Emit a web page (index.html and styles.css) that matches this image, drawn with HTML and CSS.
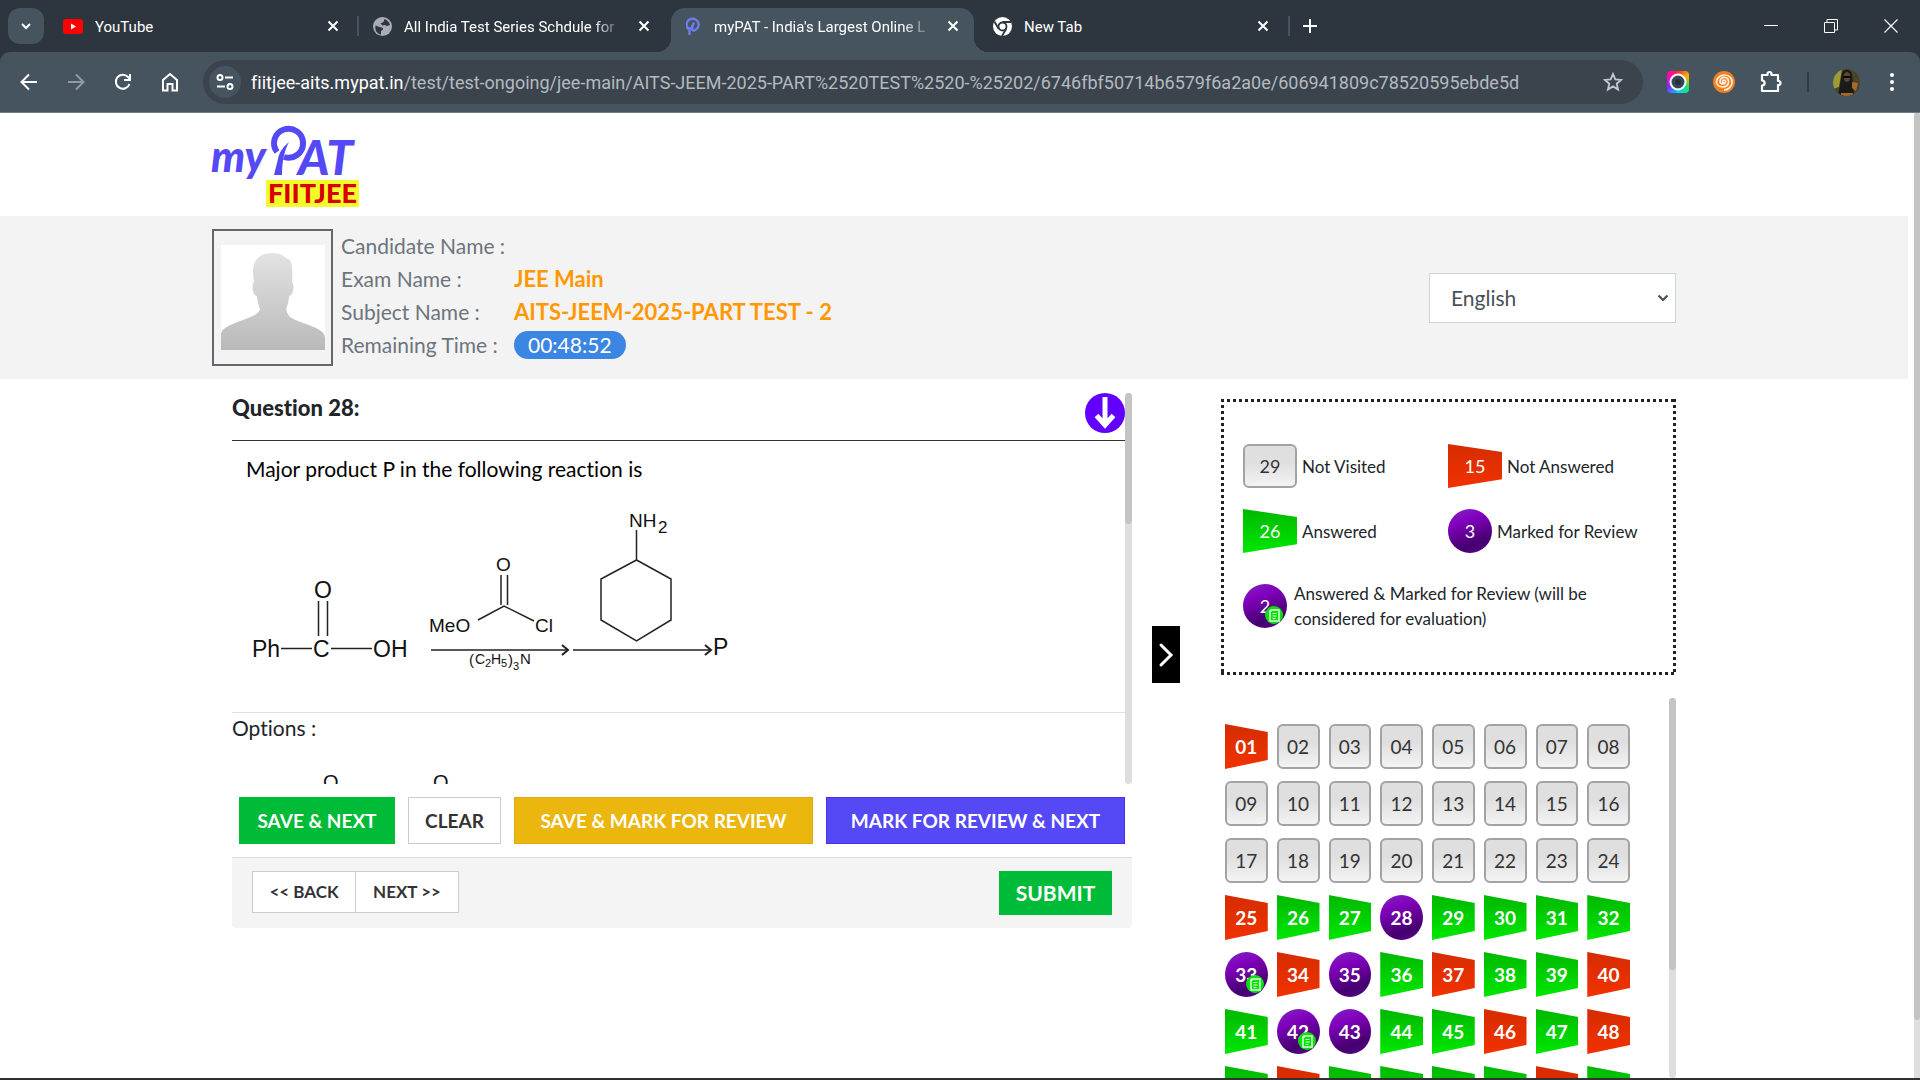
FILE: index.html
```html
<!DOCTYPE html>
<html lang="en">
<head>
<meta charset="utf-8">
<title>myPAT - India's Largest Online Test</title>
<link rel="stylesheet" href="styles.css">
</head>
<body>
<svg class="defs" aria-hidden="true">
  <symbol id="x" viewBox="0 0 12 12"><path d="M1.5 1.5l9 9M10.500 1.500l-9 9" stroke="currentColor" stroke-width="2" fill="none"/></symbol>
  <symbol id="note" viewBox="0 0 18 18"><circle cx="9" cy="9" r="9" fill="#0be00b"/><path d="M4 5h2V4h8v11H5V5" fill="none" stroke="#d9ffd9" stroke-width="1.500"/><path d="M7.500 7.500h4M7.500 10h4M7.500 12.500h3" stroke="#d9ffd9" stroke-width="1.200"/></symbol>
</svg>

<div class="browser">
  <div class="tabs">
    <button class="tab-search" aria-label="Search tabs"><svg width="12" height="12" viewBox="0 0 12 12"><path d="M2 4l4 4 4-4" fill="none" stroke="#fff" stroke-width="2"/></svg></button>
    <div class="tab tab-first">
      <svg width="20" height="15" viewBox="0 0 20 15"><rect width="20" height="15" rx="3" fill="#f00"/><path d="M8 4.500v6l5-3z" fill="#fff"/></svg>
      <span class="tab-title">YouTube</span>
      <button class="tab-close" aria-label="Close tab"><svg><use href="#x"/></svg></button>
    </div>
    <span class="tab-sep"></span>
    <div class="tab tab-second">
      <svg width="19" height="19" viewBox="0 0 19 19"><circle cx="9.500" cy="9.500" r="9.500" fill="#a9adb3"/><path d="M2.500 8.500l4 1.500c2 0 4 1 3.500 2.500l-2 1.500v3.500C4 17 1.500 13 2.500 8.500zM11.500 2c3 1 5 3.500 5.500 6l-3 1-2.500-1-2 .5-2-2 3-1.500z" fill="#2d363f"/></svg>
      <span class="tab-title fade">All India Test Series Schdule for</span>
      <button class="tab-close" aria-label="Close tab"><svg><use href="#x"/></svg></button>
    </div>
    <div class="tab tab-active">
      <svg width="16" height="20" viewBox="0 0 16 20"><path d="M2.500 13A6 6 0 1 1 8 14.500c-1.500 0-2-.5-2-2 0-3 1-4 2-6M3.500 11v8" fill="none" stroke="#6a7de8" stroke-width="2.500"/></svg>
      <span class="tab-title fade">myPAT - India's Largest Online L</span>
      <button class="tab-close" aria-label="Close tab"><svg><use href="#x"/></svg></button>
    </div>
    <div class="tab tab-last">
      <svg width="19" height="19" viewBox="0 0 19 19"><circle cx="9.500" cy="9.500" r="9.500" fill="#fff"/><circle cx="9.500" cy="9.500" r="4" fill="#fff" stroke="#2d363f" stroke-width="1.800"/><path d="M9.500 5H18M5.800 12L1.500 4.800M13.300 11.800L9 19" stroke="#2d363f" stroke-width="1.800"/></svg>
      <span class="tab-title">New Tab</span>
      <button class="tab-close" aria-label="Close tab"><svg><use href="#x"/></svg></button>
    </div>
    <span class="tab-sep"></span>
    <button class="tab-new" aria-label="New tab"><svg width="14" height="14" viewBox="0 0 14 14"><path d="M7 0v14M0 7h14" stroke="#fff" stroke-width="2"/></svg></button>
    <div class="window">
      <button aria-label="Minimize"><svg width="14" height="14" viewBox="0 0 14 14"><path d="M0 6.500h14" stroke="#fff"/></svg></button>
      <button aria-label="Restore"><svg width="14" height="14" viewBox="0 0 14 14"><path d="M.5 3.500h10v10H.5zM3 3V.5h10.500V11H11" fill="none" stroke="#fff"/></svg></button>
      <button aria-label="Close window"><svg width="14" height="14" viewBox="0 0 14 14"><path d="M.5.5l13 13M13.500.5l-13 13" stroke="#fff" stroke-width="1.200"/></svg></button>
    </div>
  </div>

  <div class="toolbar">
    <button class="nav" aria-label="Back"><svg width="18" height="18" viewBox="0 0 18 18"><path d="M17 9H2M9 1.500L1.500 9 9 16.500" fill="none" stroke="#fff" stroke-width="2"/></svg></button>
    <button class="nav" aria-label="Forward"><svg width="18" height="18" viewBox="0 0 18 18"><path d="M1 9h15M9 1.500L16.500 9 9 16.500" fill="none" stroke="#8f9aa3" stroke-width="2"/></svg></button>
    <button class="nav" aria-label="Reload"><svg width="18" height="18" viewBox="0 0 18 18"><path d="M15.500 11A7 7 0 1 1 14 4l2 2M16 1v6h-6" fill="none" stroke="#fff" stroke-width="2"/></svg></button>
    <button class="nav" aria-label="Home"><svg width="18" height="20" viewBox="0 0 18 20"><path d="M2 8l7-6 7 6v10.500h-4.500V12h-5v6.500H2z" fill="none" stroke="#fff" stroke-width="2"/></svg></button>
    <div class="omnibox">
      <button class="site" aria-label="Site information"><svg width="18" height="16" viewBox="0 0 18 16"><g fill="none" stroke="#fff" stroke-width="2"><circle cx="4" cy="3.500" r="2.500"/><path d="M9 3.500h8M1 12.500h8"/><circle cx="14" cy="12.500" r="2.500"/></g></svg></button>
      <span class="url"><b>fiitjee-aits.mypat.in</b>/test/test-ongoing/jee-main/AITS-JEEM-2025-PART%2520TEST%2520-%25202/6746fbf50714b6579f6a2a0e/606941809c78520595ebde5d</span>
      <button class="star" aria-label="Bookmark"><svg width="20" height="20" viewBox="0 0 20 20"><path d="M10 2l2.300 5.400 5.900.5-4.500 3.800 1.400 5.800L10 14.400l-5.100 3.100 1.400-5.800L1.800 7.900l5.900-.5z" fill="none" stroke="#c5c9cc" stroke-width="1.800"/></svg></button>
    </div>
    <div class="extensions">
      <button class="rainbow" aria-label="Camera extension"><svg width="18" height="18" viewBox="0 0 18 18"><circle cx="9" cy="9" r="7.500" fill="#39455a" stroke="#fff" stroke-width="2"/><circle cx="9" cy="9" r="3" fill="#233"/></svg></button>
      <button aria-label="Spiral extension"><svg width="22" height="22" viewBox="0 0 22 22"><circle cx="11" cy="11" r="11" fill="#f57f1e"/><path d="M11 12a1.500 1.500 0 1 1 1.500-1.500c0 3-5.500 3.500-5.500 0C7 5 15.500 5 15.500 11c0 7-12 6-12 0 0-4 4-7 8-7 5 0 8 3.500 7.500 8-.5 4-4 7-8 7" fill="none" stroke="#fff1e0" stroke-width="1.700"/></svg></button>
      <button aria-label="Extensions"><svg width="24" height="24" viewBox="0 0 24 24"><path d="M3 5h5.500V4a2 2 0 0 1 4 0v1H19v6h.5a2 2 0 0 1 0 4H19v6H3v-5.500c3.500 0 3.500-5 0-5z" fill="none" stroke="#fff" stroke-width="2.200" stroke-linejoin="round"/></svg></button>
      <span class="tool-sep"></span>
      <button aria-label="Profile"><svg width="27" height="27" viewBox="0 0 27 27"><defs><clipPath id="av"><circle cx="13.500" cy="13.500" r="13.500"/></clipPath></defs><g clip-path="url(#av)"><path fill="#4a4526" d="M0 0h27v27H0z"/><path fill="#9d9b35" d="M0 0h9L6 18 0 20z"/><path fill="#1a1a1b" d="M9 4c2-5 9-4 10 1l2 22H5z"/><ellipse cx="14" cy="8" rx="3.500" ry="5" fill="#60452f"/><path fill="#0b0b0b" d="M10 7h8v2h-8z"/><path fill="#a46a2b" d="M19 13l6 1-2 8-4-3zM8 24h12v3H8z"/></g></svg></button>
      <button class="menu" aria-label="Menu"><svg width="4" height="20" viewBox="0 0 4 20"><g fill="#fff"><circle cx="2" cy="3" r="2"/><circle cx="2" cy="10" r="2"/><circle cx="2" cy="17" r="2"/></g></svg></button>
    </div>
  </div>
</div>

<div class="viewport">
  <div class="page">
    <header class="brand">
      <a href="#" aria-label="myPAT FIITJEE">
        <svg width="150" height="84" viewBox="0 0 150 84">
          <g fill="#5549f5" class="logo-text">
            <text x="-1" y="48" font-size="43">my</text>
            <text x="86" y="51" font-size="48">AT</text>
          </g>
          <path d="M72 33A14.500 14.500 0 1 0 65 28" fill="none" stroke="#5549f5" stroke-width="6"/>
          <path d="M77 18c-7 6-10 11-11 17l-4 16h8c0-12 2-24 7-33z" fill="#5549f5"/>
          <rect x="54" y="56" width="93" height="27" fill="#f3fb2d"/>
          <text x="56" y="79" font-size="27" fill="#d90000" class="logo-heavy">FIITJEE</text>
        </svg>
      </a>
    </header>

    <section class="candidate">
      <div class="photo">
        <svg width="104" height="105" viewBox="0 0 104 105"><defs><linearGradient id="ph" x1="0" y1="0" x2="0" y2="1"><stop offset="0" stop-color="#e3e3e3"/><stop offset="1" stop-color="#b9b9b9"/></linearGradient></defs><path fill="#fff" d="M0 0h104v105H0z"/><path fill="url(#ph)" d="M52 8c6 0 10 2 13 5 6 1 7 8 6 24 3 3 1 14-3 14 0 6-2 10-3 13 2 8 5 9 12 12 16 6 27 9 27 17v12H0V90c0-8 12-11 27-17 7-3 10-4 12-9-1-3-3-8-3-13-4 0-6-11-3-14-2-12-1-20 4-24 4-4 9-5 15-5z"/></svg>
      </div>
      <dl class="facts">
        <dt>Candidate Name :</dt><dd></dd>
        <dt>Exam Name :</dt><dd>JEE Main</dd>
        <dt>Subject Name :</dt><dd>AITS-JEEM-2025-PART TEST - 2</dd>
        <dt>Remaining Time :</dt><dd><span class="timer">00:48:52</span></dd>
      </dl>
      <div class="language">
        <select aria-label="Language"><option>English</option></select>
        <svg width="12" height="8" viewBox="0 0 12 8"><path d="M1.500 1.500L6 6l4.500-4.500" fill="none" stroke="#495057" stroke-width="2.200"/></svg>
      </div>
    </section>

    <main class="exam">
      <section class="left">
        <div class="scroller">
          <div class="question">
            <div class="question-head">
              <h2>Question 28:</h2>
              <button class="down" aria-label="Scroll down"><svg width="40" height="40" viewBox="0 0 40 40"><circle cx="20" cy="20" r="20" fill="#6200ff"/><path d="M20 4v29M11.500 22.500L20 32l8.500-9.500" fill="none" stroke="#fff" stroke-width="5"/></svg></button>
            </div>
            <div class="question-body">
              <p>Major product P in the following reaction is</p>
              <svg class="chem" width="500" height="180" viewBox="246 502 500 180" role="img" aria-label="Reaction scheme">
                <g stroke="#222" stroke-width="1.500" fill="none">
                  <path d="M281 648.500h31M331 648.500h41M318.500 601v35M327.500 601v35"/>
                  <path d="M478 620l26-14 30 15M501 575v30M507.500 575v30"/>
                  <path d="M636.500 530v30l34.500 19v41l-34.500 21-35.500-21v-41l35.500-19"/>
                  <path d="M431 650h136M573 650h137"/><path d="M562 645l6 5-6 5M705 645l6 5-6 5" stroke-width="2"/>
                </g>
                <g class="atoms" font-size="23">
                  <text x="252" y="657">Ph</text><text x="313" y="657">C</text><text x="373" y="657">OH</text><text x="314" y="598">O</text><text x="713" y="655">P</text>
                </g>
                <g class="atoms" font-size="19">
                  <text x="429" y="632">MeO</text><text x="496" y="571">O</text><text x="535" y="632">Cl</text><text x="629" y="527">NH</text><text x="658" y="533" font-size="17">2</text>
                </g>
                <g class="atoms" font-size="15">
                  <text x="469" y="665">(</text><text x="475" y="664" font-size="14">C</text><text x="485" y="667" font-size="11">2</text><text x="491" y="664" font-size="14">H</text><text x="501" y="667" font-size="11">5</text><text x="508" y="665">)</text><text x="513" y="670" font-size="11">3</text><text x="520" y="664">N</text>
                </g>
              </svg>
            </div>
            <div class="options">
              <p>Options :</p>
              <svg width="500" height="80" viewBox="232 744 500 80" role="img" aria-label="First option"><g class="atoms" font-size="20"><text x="323" y="790">O</text><text x="433" y="790">O</text></g></svg>
            </div>
          </div>
          <div class="bar"><span class="thumb thumb-question"></span></div>
        </div>
        <div class="actions">
          <button class="btn green">SAVE &amp; NEXT</button>
          <button class="btn plain">CLEAR</button>
          <button class="btn amber">SAVE &amp; MARK FOR REVIEW</button>
          <button class="btn indigo">MARK FOR REVIEW &amp; NEXT</button>
        </div>
        <div class="pager">
          <button class="step">&lt;&lt; BACK</button><button class="step">NEXT &gt;&gt;</button>
          <button class="submit">SUBMIT</button>
        </div>
      </section>

      <button class="toggle" aria-label="Collapse panel"><svg width="16" height="26" viewBox="0 0 16 26"><path d="M3 3l10 10L3 23" fill="none" stroke="#fff" stroke-width="3" stroke-linecap="round"/></svg></button>

      <aside class="right">
        <div class="legend">
          <div><span class="q none">29</span>Not Visited</div>
          <div><span class="q red">15</span>Not Answered</div>
          <div><span class="q ok">26</span>Answered</div>
          <div><span class="q mark">3</span>Marked for Review</div>
          <div class="wide"><span class="q mark">2<svg><use href="#note"/></svg></span><p>Answered &amp; Marked for Review (will be considered for evaluation)</p></div>
        </div>
        <div class="scroller palette-scroller">
          <div class="palette">
            <button class="q red">01</button><button class="q none">02</button><button class="q none">03</button><button class="q none">04</button><button class="q none">05</button><button class="q none">06</button><button class="q none">07</button><button class="q none">08</button>
            <button class="q none">09</button><button class="q none">10</button><button class="q none">11</button><button class="q none">12</button><button class="q none">13</button><button class="q none">14</button><button class="q none">15</button><button class="q none">16</button>
            <button class="q none">17</button><button class="q none">18</button><button class="q none">19</button><button class="q none">20</button><button class="q none">21</button><button class="q none">22</button><button class="q none">23</button><button class="q none">24</button>
            <button class="q red">25</button><button class="q ok">26</button><button class="q ok">27</button><button class="q mark">28</button><button class="q ok">29</button><button class="q ok">30</button><button class="q ok">31</button><button class="q ok">32</button>
            <button class="q mark">33<svg><use href="#note"/></svg></button><button class="q red">34</button><button class="q mark">35</button><button class="q ok">36</button><button class="q red">37</button><button class="q ok">38</button><button class="q ok">39</button><button class="q red">40</button>
            <button class="q ok">41</button><button class="q mark">42<svg><use href="#note"/></svg></button><button class="q mark">43</button><button class="q ok">44</button><button class="q ok">45</button><button class="q red">46</button><button class="q ok">47</button><button class="q red">48</button>
            <button class="q ok" aria-label="Question 49"></button><button class="q red" aria-label="Question 50"></button><button class="q ok" aria-label="Question 51"></button><button class="q ok" aria-label="Question 52"></button><button class="q ok" aria-label="Question 53"></button><button class="q ok" aria-label="Question 54"></button><button class="q red" aria-label="Question 55"></button><button class="q ok" aria-label="Question 56"></button>
          </div>
          <div class="bar"><span class="thumb thumb-palette"></span></div>
        </div>
      </aside>
    </main>
  </div>
  <div class="page-bar"><span class="thumb thumb-page"></span></div>
</div>
<div class="taskbar"></div>
</body>
</html>
```
FILE: styles.css
```css
* { box-sizing: border-box; }
body { margin: 0; height: 100vh; display: flex; flex-direction: column; overflow: hidden; background: #fff; color: #212529; font-family: Lato, "Open Sans", sans-serif; font-size: 21px; line-height: 30px; font-variant-ligatures: none; }
button { margin: 0; padding: 0; border: 0; background: none; color: inherit; font: inherit; }
p, h2, dl, dd { margin: 0; }
svg { display: block; flex: none; }
.defs { display: none; }

/* Browser frame */
.browser { flex: none; background: #2d363f; color: #fff; font-family: Roboto, "Open Sans", sans-serif; border-bottom: 1px solid #6b7b8a; }
.tabs { display: flex; align-items: center; height: 52px; padding-left: 8px; }
.tab-search { display: grid; place-items: center; width: 36px; height: 36px; border-radius: 12px; background: #46545f; }
.tab { display: flex; align-items: center; height: 36px; padding-right: 14px; font-size: 15px; line-height: 20px; }
.tab-title { flex: 1; margin: 0 14px 0 12px; padding-top: 2px; overflow: hidden; white-space: nowrap; }
.fade { mask-image: linear-gradient(90deg, #000 86%, transparent); }
.tab-close svg { width: 12px; height: 12px; }
.tab-first { width: 313px; padding-left: 19px; padding-right: 18px; }
.tab-second { width: 312px; padding-left: 14px; padding-right: 21px; }
.tab-active { position: relative; align-self: flex-end; width: 303px; height: 44px; padding: 0 15px 8px 15px; border-radius: 14px 14px 0 0; background: #46545f; }
.tab-active::before, .tab-active::after { content: ""; position: absolute; bottom: 0; width: 14px; height: 14px; }
.tab-active::before { right: 100%; background: radial-gradient(circle at 0 0, transparent 14px, #46545f 14px); }
.tab-active::after { left: 100%; background: radial-gradient(circle at 100% 0, transparent 14px, #46545f 14px); }
.tab-last { width: 314px; padding-left: 19px; padding-right: 19px; }
.tab-sep { width: 2px; height: 20px; background: #46545f; }
.tab-new { margin-left: 13px; }
.window { display: flex; gap: 46px; margin-left: auto; padding-right: 22px; }
.toolbar { display: flex; align-items: center; height: 60px; padding-left: 20px; border-radius: 10px 10px 0 0; background: #46545f; }
.nav { display: grid; place-items: center; width: 18px; margin-right: 29px; }
.omnibox { display: flex; align-items: center; flex: 1; height: 44px; margin-left: -5px; padding: 0 20px 0 6px; border-radius: 22px; background: #3b444d; }
.site { display: grid; place-items: center; width: 32px; height: 32px; margin-right: 10px; border-radius: 50%; background: #46545f; }
.url { flex: 1; padding-top: 2px; color: #b4babf; font-size: 18px; line-height: 24px; white-space: nowrap; }
.url b { color: #fff; font-weight: 400; }
.extensions { display: flex; align-items: center; gap: 24px; padding: 0 26px 0 24px; }
.menu { margin-left: 6px; }
.rainbow { padding: 2px; border-radius: 4px; background: conic-gradient(#ff2a2a, #ffb300, #20e070, #00d5ff, #7a30ff, #ff00c8, #ff2a2a); }
.tool-sep { width: 2px; height: 20px; background: #303a43; }

/* Page */
.viewport { display: flex; flex: 1; min-height: 0; }
.page { display: flex; flex-direction: column; flex: 1; min-width: 0; margin-right: 6px; }
.brand { flex: none; height: 103px; padding: 11px 232px 0 212px; }
.brand a { display: inline-block; }
.brand svg { overflow: visible; }
.logo-text { font-style: italic; font-weight: 900; }
.logo-heavy { font-weight: 900; }
.candidate { flex: none; display: flex; align-items: center; height: 163px; padding: 0 232px 0 212px; background: #f3f3f3; }
.photo { display: grid; place-items: center; width: 121px; height: 137px; border: 2px solid #646669; }
.facts { display: grid; grid-template-columns: 173px auto; grid-auto-rows: 30px; row-gap: 3px; margin-left: 8px; padding-bottom: 4px; color: #6c757d; }
.facts dd { color: #ff9800; font-size: 22px; font-weight: 700; }
.timer { display: inline-block; height: 28px; padding: 0 14px; border-radius: 14px; background: #3b86e3; color: #fff; font-size: 21px; font-weight: 400; line-height: 28px; }
.language { position: relative; width: 247px; margin-left: auto; }
.language select { display: block; width: 100%; height: 50px; padding: 0 21px; appearance: none; border: 1px solid #ced4da; border-radius: 0; background: #fff; color: #495057; font: inherit; }
.language svg { position: absolute; top: 21px; right: 7px; pointer-events: none; }

.exam { display: flex; flex: 1; min-height: 0; padding: 14px 232px 0 232px; }
.left { flex: 1; min-width: 0; }
.scroller { display: flex; overflow: hidden; }
.left .scroller { height: 391px; }
.bar { flex: none; width: 7px; background: #dedede; border-radius: 4px; }
.thumb { display: block; border-radius: 4px; background: #c4c4c4; }
.thumb-question { height: 131px; }
.thumb-palette { height: 272px; }
.question { flex: 1; }
.question-head { display: flex; justify-content: space-between; align-items: flex-start; height: 48px; border-bottom: 1px solid #333; }
.question-head h2 { font-size: 22px; line-height: 30px; font-weight: 900; }
.question-body { height: 272px; padding: 13px 14px; color: #000; border-bottom: 1px solid #dee2e6; }
.chem { margin-top: 18px; }
.atoms { fill: #111; font-family: "Liberation Sans", Arial, sans-serif; }
.actions { display: flex; gap: 13px; padding: 13px 7px; font-size: 19px; font-weight: 700; color: #fff; }
.btn { height: 47px; border: 1px solid transparent; white-space: nowrap; }
.green { width: 156px; background: #00bb37; }
.plain { width: 93px; border-color: #ccc; background: #fff; color: #333; }
.amber { flex: 1; background: #ebb60d; border-color: #dcab10; }
.indigo { flex: 1; background: #5549f6; border-color: #4a2de6; }
.pager { display: flex; align-items: flex-start; height: 71px; padding: 13px 20px; border-top: 1px solid #ddd; border-radius: 0 0 4px 4px; background: #f4f4f4; }
.step { width: 104px; height: 42px; border: 1px solid #ccc; background: #fff; color: #333; font-size: 17px; font-weight: 700; }
.step + .step { margin-left: -1px; }
.submit { width: 113px; height: 44px; margin-left: auto; background: #00bb37; color: #fff; font-weight: 700; }
.toggle { display: grid; place-items: center; flex: none; width: 28px; height: 57px; margin: 233px 41px 0 20px; background: #000; }

.right { display: flex; flex-direction: column; flex: none; width: 455px; padding-top: 6px; }
.legend { --dots: #222 0 3px, transparent 3px 6px; flex: none; display: grid; grid-template-columns: 205px auto; grid-template-rows: 44px 44px auto; row-gap: 21px; align-content: start; height: 276px; padding: 45px 22px; font-size: 17px; line-height: 25px;
  background: repeating-linear-gradient(90deg, var(--dots)) top / 100% 3px no-repeat, repeating-linear-gradient(90deg, var(--dots)) bottom / 100% 3px no-repeat, repeating-linear-gradient(var(--dots)) left / 3px 100% no-repeat, repeating-linear-gradient(var(--dots)) right / 3px 100% no-repeat; }
.legend > div { display: flex; align-items: center; gap: 5px; }
.legend .wide { grid-column: 1 / 3; gap: 7px; padding-top: 7px; }
.q { position: relative; display: grid; place-items: center; flex: none; height: 45px; font-size: 19px; line-height: 24px; font-weight: 700; color: #fff; }
.legend .q { width: 54px; height: 44px; font-size: 18px; font-weight: 400; }
.q.none { border: 2px solid #a3a3a3; border-radius: 6px; background: linear-gradient(#dfdfdf 40%, #f3f3f3); color: #333; font-weight: 400; }
.q.red { background: linear-gradient(#d52c00, #f23200); clip-path: polygon(0 0, 100% 18%, 100% 80%, 0 100%); }
.q.ok { background: linear-gradient(#00b700, #00e800); clip-path: polygon(0 0, 100% 18%, 100% 80%, 0 100%); }
.q.mark { border-radius: 50%; background: linear-gradient(160deg, #7d2ac0, #8200bd 30%, #44006e 75%, #5b0598); }
.legend .q.mark { width: 44px; }
.q svg { position: absolute; right: 4px; bottom: 4px; width: 18px; height: 18px; }
.palette-scroller { flex: 1; min-height: 0; margin-top: 23px; justify-content: space-between; }
.palette { display: grid; grid-template-columns: repeat(8, 1fr); gap: 12px 9px; align-content: start; width: 413px; padding: 26px 4px; }
.page-bar { width: 6px; background: #dedede; }
.thumb-page { height: 907px; }
.taskbar { flex: none; height: 2px; background: #303030; }
```
